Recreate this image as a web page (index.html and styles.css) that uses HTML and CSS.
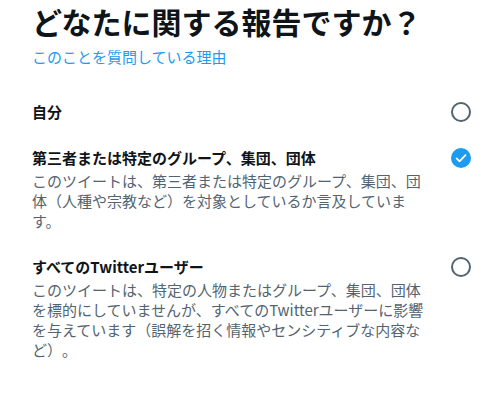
FILE: index.html
```html
<!DOCTYPE html>
<html lang="ja">
<head>
<meta charset="utf-8">
<title>報告</title>
<link rel="stylesheet" href="styles.css">
</head>
<body>
<main class="report">
  <h1 class="title">どなたに関する報告ですか？</h1>
  <a class="why" href="#">このことを質問している理由</a>
  <ul class="options">
    <li class="option">
      <div class="option-text">
        <div class="option-label">自分</div>
      </div>
      <span class="radio"></span>
    </li>
    <li class="option">
      <div class="option-text">
        <div class="option-label">第三者または特定のグループ、集団、団体</div>
        <div class="option-desc">このツイートは、第三者または特定のグループ、集団、団体（人種や宗教など）を対象としているか言及しています。</div>
      </div>
      <span class="radio radio-checked">
        <svg viewBox="0 0 20 20" width="20" height="20" aria-hidden="true">
          <circle cx="10" cy="10" r="10" fill="#1d9bf0"/>
          <path d="M5.6 10.4l2.9 2.9 6-6.2" fill="none" stroke="#fff" stroke-width="1.8" stroke-linecap="round" stroke-linejoin="round"/>
        </svg>
      </span>
    </li>
    <li class="option">
      <div class="option-text">
        <div class="option-label">すべてのTwitterユーザー</div>
        <div class="option-desc">このツイートは、特定の人物またはグループ、集団、団体を標的にしていませんが、すべてのTwitterユーザーに影響を与えています（誤解を招く情報やセンシティブな内容など）。</div>
      </div>
      <span class="radio"></span>
    </li>
  </ul>
</main>
</body>
</html>
```

FILE: styles.css
```css
html, body {
  margin: 0;
  padding: 0;
  background: #ffffff;
}

body {
  font-family: "Noto Sans CJK JP", "Noto Sans", sans-serif;
  color: #0f1419;
  text-spacing-trim: space-all;
}

.report {
  padding: 3px 24px 0 32px;
}

.title {
  margin: 0;
  font-size: 30px;
  line-height: 36px;
  font-weight: 700;
  color: #0f1419;
}

.why {
  display: block;
  margin-top: 8px;
  font-size: 15px;
  line-height: 20px;
  color: #1d9bf0;
  text-decoration: none;
}

.options {
  list-style: none;
  margin: 22px 0 0;
  padding: 0;
}

.option {
  display: flex;
  align-items: flex-start;
  padding: 13px 0;
}

.option-text {
  flex: 1;
  margin-right: 24px;
}

.option-label {
  font-size: 15px;
  line-height: 20px;
  font-weight: 700;
  color: #0f1419;
}

.option-desc {
  margin-top: 3px;
  font-size: 15px;
  line-height: 20px;
  color: #536471;
}

.radio {
  flex: none;
  width: 20px;
  height: 20px;
  box-sizing: border-box;
  border: 2px solid #536471;
  border-radius: 50%;
}

.radio-checked {
  border: none;
}

.radio-checked svg {
  display: block;
}
```
